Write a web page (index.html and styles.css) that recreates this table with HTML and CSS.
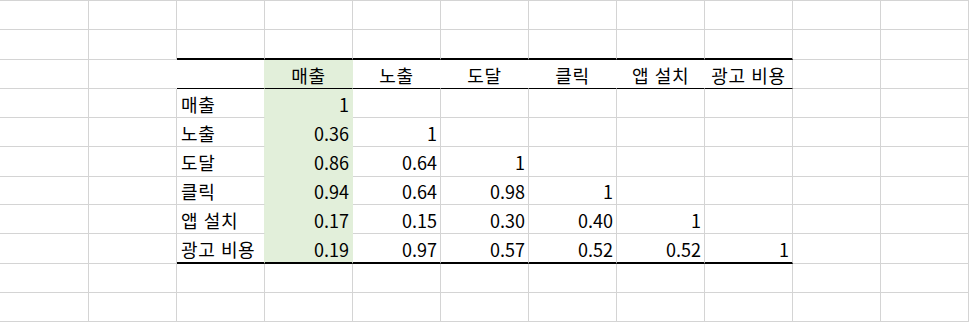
FILE: index.html
```html
<!DOCTYPE html>
<html lang="ko">
<head>
<meta charset="utf-8">
<title>상관 계수</title>
<link rel="stylesheet" href="styles.css">
</head>
<body>
<div class="sheet">
  <!-- row 1 -->
  <div class="c"></div><div class="c"></div><div class="c"></div><div class="c"></div><div class="c"></div><div class="c"></div><div class="c"></div><div class="c"></div><div class="c"></div><div class="c"></div><div class="c"></div>
  <!-- row 2 -->
  <div class="c"></div><div class="c"></div><div class="c tt"></div><div class="c tt"></div><div class="c tt"></div><div class="c tt"></div><div class="c tt"></div><div class="c tt"></div><div class="c tt"></div><div class="c"></div><div class="c"></div>
  <!-- row 3 header -->
  <div class="c"></div><div class="c hide-r"></div><div class="c hd to-g"></div><div class="c hd g">매출</div><div class="c hd">노출</div><div class="c hd">도달</div><div class="c hd">클릭</div><div class="c hd">앱 설치</div><div class="c hd keep-r">광고 비용</div><div class="c"></div><div class="c"></div>
  <!-- row 4 -->
  <div class="c"></div><div class="c"></div><div class="c lbl to-g">매출</div><div class="c num g">1</div><div class="c num"></div><div class="c num"></div><div class="c num"></div><div class="c num"></div><div class="c num"></div><div class="c"></div><div class="c"></div>
  <!-- row 5 -->
  <div class="c"></div><div class="c"></div><div class="c lbl to-g">노출</div><div class="c num g">0.36</div><div class="c num">1</div><div class="c num"></div><div class="c num"></div><div class="c num"></div><div class="c num"></div><div class="c"></div><div class="c"></div>
  <!-- row 6 -->
  <div class="c"></div><div class="c"></div><div class="c lbl to-g">도달</div><div class="c num g">0.86</div><div class="c num">0.64</div><div class="c num">1</div><div class="c num"></div><div class="c num"></div><div class="c num"></div><div class="c"></div><div class="c"></div>
  <!-- row 7 -->
  <div class="c"></div><div class="c"></div><div class="c lbl to-g">클릭</div><div class="c num g">0.94</div><div class="c num">0.64</div><div class="c num">0.98</div><div class="c num">1</div><div class="c num"></div><div class="c num"></div><div class="c"></div><div class="c"></div>
  <!-- row 8 -->
  <div class="c"></div><div class="c"></div><div class="c lbl to-g">앱 설치</div><div class="c num g">0.17</div><div class="c num">0.15</div><div class="c num">0.30</div><div class="c num">0.40</div><div class="c num">1</div><div class="c num"></div><div class="c"></div><div class="c"></div>
  <!-- row 9 -->
  <div class="c"></div><div class="c"></div><div class="c lbl to-g bb">광고 비용</div><div class="c num g bb">0.19</div><div class="c num bb">0.97</div><div class="c num bb">0.57</div><div class="c num bb">0.52</div><div class="c num bb">0.52</div><div class="c num bb">1</div><div class="c"></div><div class="c"></div>
  <!-- row 10 -->
  <div class="c"></div><div class="c"></div><div class="c"></div><div class="c"></div><div class="c"></div><div class="c"></div><div class="c"></div><div class="c"></div><div class="c"></div><div class="c"></div><div class="c"></div>
  <!-- row 11 -->
  <div class="c"></div><div class="c"></div><div class="c"></div><div class="c"></div><div class="c"></div><div class="c"></div><div class="c"></div><div class="c"></div><div class="c"></div><div class="c"></div><div class="c"></div>
</div>
</body>
</html>
```
FILE: styles.css
```css
html, body {
  margin: 0;
  padding: 0;
  background: #ffffff;
}

body {
  width: 969px;
  height: 322px;
  overflow: hidden;
  font-family: "Noto Sans CJK KR", "Noto Sans", sans-serif;
  font-size: 18px;
  color: #000000;
}

.sheet {
  display: grid;
  grid-template-columns: 89px repeat(10, 88px);
  grid-template-rows: 29px 30px 29px 29px 29px 30px 28px 29px 30px 29px 29px;
  border-top: 1px solid #d4d4d4;
}

.c {
  box-sizing: border-box;
  border-right: 1px solid #d4d4d4;
  border-bottom: 1px solid #d4d4d4;
  display: flex;
  align-items: center;
  white-space: nowrap;
  line-height: 1;
  background: #ffffff;
}

/* thick top rule of the table */
.tt {
  border-bottom: 2px solid #000000;
}

/* header row */
.hd {
  justify-content: center;
  border-bottom: 1px solid #000000;
  border-right-color: #ffffff;
  padding-top: 1px;
  letter-spacing: 0.6px;
}

.keep-r {
  border-right-color: #d4d4d4;
}

.hide-r {
  border-right-color: #ffffff;
}

.to-g {
  border-right-color: #e2efda;
}

.lbl {
  padding-left: 4px;
  padding-top: 1px;
  letter-spacing: 0.6px;
}

.num {
  justify-content: flex-end;
  padding-right: 3px;
  padding-top: 1px;
}

.g {
  background: #e2efda;
  border-right-color: #e2efda;
  border-bottom-color: #e2efda;
}

.hd.g {
  border-bottom-color: #000000;
}

/* thick bottom rule of the table */
.bb,
.g.bb {
  border-bottom: 2px solid #000000;
}
```
